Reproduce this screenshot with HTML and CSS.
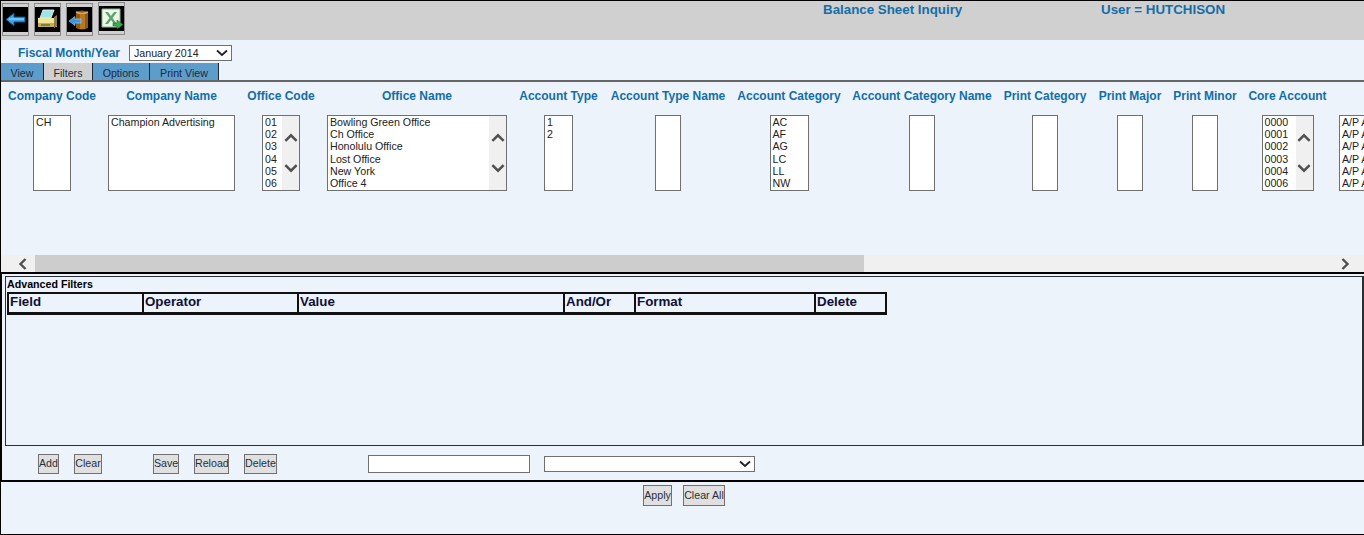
FILE: index.html
```html
<!DOCTYPE html>
<html lang="en">
<head>
<meta charset="utf-8">
<title>Balance Sheet Inquiry</title>
<link rel="stylesheet" href="styles.css">
</head>
<body>
<div class="page">
  <header class="top">
    <div class="tools">
      <button class="tool"><svg viewBox="0 0 25 25" width="25" height="25"><rect width="25" height="25" fill="#000"/><path d="M3 12.500 11 6v4h11v5H11v4z" fill="#3fa5e8" stroke="#0d4f86" stroke-width="1"/><path d="M6 12h15" stroke="#a8dcff" stroke-width="1"/></svg></button>
      <button class="tool"><svg viewBox="0 0 25 25" width="25" height="25"><rect width="25" height="25" fill="#000"/><path d="M8 3h11l-3 8H5z" fill="#9fe3ea" stroke="#e8ffff" stroke-width=".8"/><path d="M3 11h19v9H3z" fill="#efe59a"/><path d="M3 16h19v4H3z" fill="#c4ae5e"/><path d="M22 8v11l-3 2V10z" fill="#8f7c3a"/><path d="M6 17.500h9v1H6z" fill="#4d4520"/></svg></button>
      <button class="tool"><svg viewBox="0 0 25 25" width="25" height="25"><rect width="25" height="25" fill="#000"/><path d="M9 5q6-3 12 0v16q-6 3-12 0z" fill="#8f5a14"/><path d="M9 5q6 3 12 0" fill="none" stroke="#d9a860" stroke-width="1.500"/><path d="M13 7h5v15h-5z" fill="#b87820"/><path d="M2 14 8 9.500V12h6v4H8v2.500z" fill="#3a96dc" stroke="#a9d8fb" stroke-width=".6"/></svg></button>
      <button class="tool tool-up"><svg viewBox="0 0 25 25" width="25" height="25"><rect width="25" height="25" fill="#000"/><path d="M3 3h18v18H3z" fill="#eef6ea" stroke="#8ab88a"/><path d="M6 6h3l3 4 3-4h3l-4.500 6 4.500 6h-3l-3-4-3 4H6l4.500-6z" fill="#5aa56c"/><path d="M14 17h4v-3l6 4.500-6 4.500v-3h-4z" fill="#36b34a" stroke="#0e5a1e" stroke-width=".5"/></svg></button>
    </div>
    <div class="title">Balance Sheet Inquiry</div>
    <div class="user">User = HUTCHISON</div>
  </header>

  <div class="fiscal">
    <label class="fiscal-label">Fiscal Month/Year</label>
    <div class="fake-select fiscal-select"><span>January 2014</span><svg class="caret" viewBox="0 0 12 8" width="12" height="8"><path d="M1 1.500 6 6l5-4.500" fill="none" stroke="#222" stroke-width="1.800"/></svg></div>
  </div>

  <nav class="tabs">
    <a class="tab t-view">View</a>
    <a class="tab active t-filters">Filters</a>
    <a class="tab t-options">Options</a>
    <a class="tab t-print">Print View</a>
  </nav>

  <section class="filters">
    <div class="col c1"><h3>Company Code</h3><div class="list w38"><div class="opts"><div>CH</div></div></div></div>
    <div class="col c2"><h3>Company Name</h3><div class="list w127"><div class="opts"><div>Champion Advertising</div></div></div></div>
    <div class="col c3"><h3>Office Code</h3><div class="list w38"><div class="opts"><div>01</div><div>02</div><div>03</div><div>04</div><div>05</div><div>06</div></div><div class="vbar"><svg viewBox="0 0 12 8" width="14" height="9"><path d="M1 7 6 2l5 5" fill="none" stroke="#505050" stroke-width="2.200"/></svg><svg viewBox="0 0 12 8" width="14" height="9"><path d="M1 1l5 5 5-5" fill="none" stroke="#505050" stroke-width="2.200"/></svg></div></div></div>
    <div class="col c4"><h3>Office Name</h3><div class="list w180"><div class="opts"><div>Bowling Green Office</div><div>Ch Office</div><div>Honolulu Office</div><div>Lost Office</div><div>New York</div><div>Office 4</div></div><div class="vbar"><svg viewBox="0 0 12 8" width="14" height="9"><path d="M1 7 6 2l5 5" fill="none" stroke="#505050" stroke-width="2.200"/></svg><svg viewBox="0 0 12 8" width="14" height="9"><path d="M1 1l5 5 5-5" fill="none" stroke="#505050" stroke-width="2.200"/></svg></div></div></div>
    <div class="col c5"><h3>Account Type</h3><div class="list w29"><div class="opts"><div>1</div><div>2</div></div></div></div>
    <div class="col c6"><h3>Account Type Name</h3><div class="list w26"></div></div>
    <div class="col c7"><h3>Account Category</h3><div class="list w39"><div class="opts"><div>AC</div><div>AF</div><div>AG</div><div>LC</div><div>LL</div><div>NW</div></div></div></div>
    <div class="col c8"><h3>Account Category Name</h3><div class="list w26"></div></div>
    <div class="col c9"><h3>Print Category</h3><div class="list w26"></div></div>
    <div class="col c10"><h3>Print Major</h3><div class="list w26"></div></div>
    <div class="col c11"><h3>Print Minor</h3><div class="list w26"></div></div>
    <div class="col c12"><h3>Core Account</h3><div class="list w52"><div class="opts"><div>0000</div><div>0001</div><div>0002</div><div>0003</div><div>0004</div><div>0006</div></div><div class="vbar"><svg viewBox="0 0 12 8" width="14" height="9"><path d="M1 7 6 2l5 5" fill="none" stroke="#505050" stroke-width="2.200"/></svg><svg viewBox="0 0 12 8" width="14" height="9"><path d="M1 1l5 5 5-5" fill="none" stroke="#505050" stroke-width="2.200"/></svg></div></div></div>
    <div class="col c13"><h3>Core Account Name</h3><div class="list w200"><div class="opts"><div>A/P Accrued</div><div>A/P Accrued</div><div>A/P Accrued</div><div>A/P Accrued</div><div>A/P Accrued</div><div>A/P Accrued</div></div></div></div>
  </section>
  <div class="hbar">
    <svg class="harrow" viewBox="0 0 10 12" width="11" height="12"><path d="M8 1 3 6l5 5" fill="none" stroke="#505050" stroke-width="2.400"/></svg>
    <div class="track"><div class="thumb"></div></div>
    <svg class="harrow" viewBox="0 0 10 12" width="11" height="12"><path d="M2 1l5 5-5 5" fill="none" stroke="#505050" stroke-width="2.400"/></svg>
  </div>

  <section class="advanced">
    <div class="adv-box">
      <div class="adv-title">Advanced Filters</div>
      <table class="adv-table">
        <thead><tr><th class="f1">Field</th><th class="f2">Operator</th><th class="f3">Value</th><th class="f4">And/Or</th><th class="f5">Format</th><th class="f6">Delete</th></tr></thead>
      </table>
    </div>
    <div class="adv-actions">
      <button class="btn add">Add</button>
      <button class="btn clear">Clear</button>
      <button class="btn save">Save</button>
      <button class="btn reload">Reload</button>
      <button class="btn del">Delete</button>
      <input class="name-input" type="text">
      <div class="fake-select saved-select"><svg class="caret" viewBox="0 0 12 8" width="12" height="8"><path d="M1 1.500 6 6l5-4.500" fill="none" stroke="#222" stroke-width="1.800"/></svg></div>
    </div>
  </section>

  <div class="footer-actions">
    <button class="btn apply">Apply</button>
    <button class="btn clear-all">Clear All</button>
  </div>
</div>
</body>
</html>
```

FILE: styles.css
```css
* { box-sizing: border-box; }
html, body { margin: 0; padding: 0; }
body { background: #ecf3fa; font-family: "Liberation Sans", Arial, sans-serif; color: #222; overflow: hidden; }
.page { width: 1364px; height: 535px; overflow: hidden; border-top: 1px solid #000; border-left: 1px solid #000; border-bottom: 1px solid #000; display: flex; flex-direction: column; }

.top { height: 39px; background: #d0d0d0; display: flex; align-items: flex-start; flex: none; }
.tools { display: flex; gap: 5px; padding: 2px 0 0 1px; width: 822px; align-items: flex-start; }
.tool { width: 27px; height: 33px; padding: 0; margin: 0; border: 1px solid #8c8c8c; background: #cfcfcf; display: flex; align-items: center; justify-content: center; }
.tool svg { display: block; }
.tool-up { margin-top: -1px; }
.title, .user { font-size: 13.330px; font-weight: 700; color: #136ea8; padding-top: 1px; line-height: 16px; }
.title { width: 278px; }

.fiscal { height: 23px; display: flex; align-items: center; flex: none; padding: 3px 0 0 17px; }
.fiscal-label { font-size: 12px; font-weight: 700; color: #136ea8; width: 111px; }
.fake-select { border: 1px solid #707070; background: #fff; display: flex; align-items: center; justify-content: space-between; font-size: 10.670px; color: #222; }
.fiscal-select { width: 103px; height: 16px; padding: 0 3px 0 4px; }
.caret { display: block; flex: none; }

.tabs { display: flex; height: 17px; flex: none; }
.tab { font-size: 10.670px; line-height: 21px; text-align: center; background: #5c9dcb; color: #1c2a38; border-right: 1px solid #1d2a36; }
.tab.active { background: #d0d0d0; }
.t-view { width: 43px; }
.t-filters { width: 49px; }
.t-options { width: 57px; }
.t-print { width: 69px; }

.filters { display: flex; height: 175px; flex: none; overflow: hidden; border-top: 2px solid #666; padding-left: 1px; }
.col { flex: none; display: flex; flex-direction: column; align-items: center; padding: 0 6px; }
.col h3 { margin: 0; height: 33px; padding-top: 7px; font-size: 12px; line-height: 15px; font-weight: 700; color: #136ea8; white-space: nowrap; }
.c1 { width: 100px; }
.c2 { width: 139px; }
.c3 { width: 80px; }
.c4 { width: 192px; }
.c5 { width: 91px; }
.c6 { width: 128px; }
.c7 { width: 114px; }
.c8 { width: 152px; }
.c9 { width: 94px; }
.c10 { width: 76px; }
.c11 { width: 74px; }
.c12 { width: 91px; }
.c13 { width: 220px; align-items: flex-start; }
.c13 h3 { visibility: hidden; }

.list { height: 76px; flex: none; border: 1px solid #707070; background: #fff; display: flex; overflow: hidden; }
.opts { flex: 1; min-width: 0; padding: 0 2px; font-size: 10.670px; line-height: 12.200px; color: #222; white-space: nowrap; }
.vbar { width: 17px; flex: none; background: #f0f0f0; display: flex; flex-direction: column; align-items: center; gap: 22px; padding-top: 17px; }
.vbar svg { display: block; }
.w26 { width: 26px; }
.w29 { width: 29px; }
.w38 { width: 38px; }
.w39 { width: 39px; }
.w52 { width: 52px; }
.w127 { width: 127px; }
.w180 { width: 180px; }
.w200 { width: 200px; }

.hbar { height: 17px; flex: none; background: #f0f0f0; display: flex; align-items: center; padding: 0 13px 0 16px; }
.track { flex: 1; height: 17px; padding: 0 8px 0 7px; }
.thumb { width: 829px; height: 17px; background: #cdcdcd; }
.harrow { display: block; flex: none; }

.advanced { height: 210px; flex: none; border-top: 2px solid #000; border-bottom: 2px solid #000; border-left: 2px solid #000; margin-left: -1px; padding: 2px 0 0 3px; }
.adv-box { height: 170px; border: 1px solid #2a2f36; border-right-width: 2px; padding: 1px 0 0 1px; }
.adv-title { font-size: 10.670px; line-height: 13px; font-weight: 700; color: #000; height: 14px; }
.adv-table { border-collapse: collapse; width: 880px; table-layout: fixed; height: 22px; border: 2px solid #111; border-bottom-width: 3px; }
.adv-table th { padding: 0 0 2px 1px; text-align: left; font-size: 13.330px; font-weight: 700; line-height: 16px; color: #101038; border-right: 2px solid #111; }
.f1 { width: 135px; }
.f2 { width: 155px; }
.f3 { width: 266px; }
.f4 { width: 71px; }
.f5 { width: 180px; }

.adv-actions { display: flex; align-items: center; height: 35px; padding-left: 33px; }
.btn { padding: 0 0 2px; margin: 0; border: 1px solid #707070; background: #e0e0e0; font-family: "Liberation Sans", Arial, sans-serif; font-size: 10.670px; color: #26303c; text-align: center; white-space: nowrap; overflow: hidden; }
.adv-actions .btn { height: 20px; }
.add { width: 21px; margin-right: 15px; }
.clear { width: 28px; margin-right: 51px; }
.save { width: 26px; margin-right: 15px; }
.reload { width: 35px; margin-right: 15px; }
.del { width: 33px; margin-right: 91px; }
.name-input { width: 162px; height: 18px; padding: 0; border: 1px solid #707070; background: #fff; margin-right: 14px; }
.saved-select { width: 211px; height: 16px; padding-right: 3px; justify-content: flex-end; }

.footer-actions { display: flex; padding: 3px 0 0 642px; gap: 11px; }
.footer-actions .btn { height: 21px; }
.apply { width: 29px; }
.clear-all { width: 42px; }
```
